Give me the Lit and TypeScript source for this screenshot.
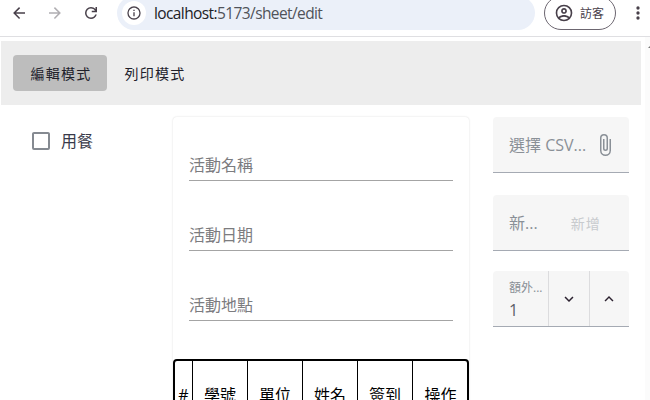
import { LitElement, html, css, svg } from "lit";
import { customElement } from "lit/decorators.js";

const mdi = (d: string, size: number, cls = "") =>
  html`<svg class=${cls} width=${size} height=${size} viewBox="0 0 24 24">${svg`<path fill="currentColor" d=${d} />`}</svg>`;

const BACK = "M20,11V13H8L13.5,18.5L12.08,19.92L4.16,12L12.08,4.08L13.5,5.5L8,11H20Z";
const FORWARD = "M4,11V13H16L10.5,18.5L11.92,19.92L19.84,12L11.92,4.08L10.5,5.5L16,11H4Z";
const RELOAD =
  "M12 20q-3.35 0-5.675-2.325T4 12q0-3.35 2.325-5.675T12 4q1.725 0 3.3.713T18 6.75V4h2v7h-7V9h4.2q-.8-1.4-2.187-2.2T12 6Q9.500 6 7.750 7.750T6 12q0 2.500 1.750 4.250T12 18q1.925 0 3.475-1.100T17.650 14h2.100q-.7 2.650-2.850 4.325T12 20";
const INFO =
  "M11,9H13V7H11M12,20C7.59,20 4,16.41 4,12C4,7.59 7.59,4 12,4C16.41,4 20,7.59 20,12C20,16.41 16.41,20 12,20M12,2A10,10 0 0,0 2,12A10,10 0 0,0 12,22A10,10 0 0,0 22,12A10,10 0 0,0 12,2M11,17H13V11H11V17Z";
const ACCOUNT =
  "M12,2A10,10 0 0,0 2,12A10,10 0 0,0 12,22A10,10 0 0,0 22,12A10,10 0 0,0 12,2M7.07,18.28C7.5,17.38 10.12,16.5 12,16.5C13.88,16.5 16.5,17.38 16.93,18.28C15.57,19.36 13.86,20 12,20C10.14,20 8.43,19.36 7.07,18.28M18.36,16.83C16.93,15.09 13.46,14.5 12,14.5C10.54,14.5 7.07,15.09 5.64,16.83C4.62,15.5 4,13.82 4,12C4,7.59 7.59,4 12,4C16.41,4 20,7.59 20,12C20,13.82 19.38,15.5 18.36,16.83M12,6C10.06,6 8.5,7.56 8.5,9.5C8.5,11.44 10.06,13 12,13C13.94,13 15.5,11.44 15.5,9.5C15.5,7.56 13.94,6 12,6M12,11A1.5,1.5 0 0,1 10.500,9.500A1.5,1.5 0 0,1 12,8A1.5,1.5 0 0,1 13.500,9.500A1.5,1.5 0 0,1 12,11Z";
const DOTS =
  "M12,16A2,2 0 0,1 14,18A2,2 0 0,1 12,20A2,2 0 0,1 10,18A2,2 0 0,1 12,16M12,10A2,2 0 0,1 14,12A2,2 0 0,1 12,14A2,2 0 0,1 10,12A2,2 0 0,1 12,10M12,4A2,2 0 0,1 14,6A2,2 0 0,1 12,8A2,2 0 0,1 10,6A2,2 0 0,1 12,4Z";
const CHECKBOX =
  "M19,3H5C3.89,3 3,3.89 3,5V19A2,2 0 0,0 5,21H19A2,2 0 0,0 21,19V5C21,3.89 20.1,3 19,3M19,5V19H5V5H19Z";
const CLIP =
  "M16.5,6V17.5A4,4 0 0,1 12.5,21.5A4,4 0 0,1 8.5,17.5V5A2.5,2.5 0 0,1 11,2.5A2.5,2.5 0 0,1 13.5,5V15.5A1,1 0 0,1 12.5,16.5A1,1 0 0,1 11.5,15.5V6H10V15.5A2.5,2.5 0 0,0 12.5,18A2.5,2.5 0 0,0 15,15.5V5A4,4 0 0,0 11,1A4,4 0 0,0 7,5V17.5A5.5,5.5 0 0,0 12.5,23A5.5,5.5 0 0,0 18,17.5V6H16.5Z";
const DOWN = "M7.41,8.58L12,13.17L16.59,8.58L18,10L12,16L6,10L7.41,8.58Z";
const UP = "M7.41,15.41L12,10.83L16.59,15.41L18,14L12,8L6,14L7.41,15.41Z";

@customElement("app-root")
export class AppRoot extends LitElement {
  static styles = css`
    :host {
      display: block;
      height: 400px;
      overflow: hidden;
      background: #fff;
      font-family: "Open Sans", "Noto Sans CJK TC", sans-serif;
      font-size: 16px;
      color: #20202a;
    }
    * { box-sizing: border-box; }
    svg { display: block; flex: none; }
    .chrome {
      display: flex;
      align-items: center;
      height: 37px;
      padding-bottom: 10px;
      border-bottom: 1px solid #dfdfe2;
      color: #48404a;
    }
    .nav { display: flex; gap: 18px; padding-left: 10px; width: 117px; }
    .off { color: #b0aeb2; }
    .url {
      display: flex;
      align-items: center;
      width: 418px;
      height: 34px;
      flex: none;
      padding-left: 5px;
      border-radius: 17px;
      background: #ebf0f9;
      color: #50535a;
      line-height: 24px;
    }
    .host { color: #202126; }
    .site {
      display: flex;
      align-items: center;
      justify-content: center;
      width: 24px;
      height: 24px;
      margin-right: 8px;
      border-radius: 50%;
      background: #fff;
      color: #48404a;
    }
    .address { font-size: 15.5px; letter-spacing: -0.6px; white-space: nowrap; }
    .guest {
      display: flex;
      align-items: center;
      gap: 6px;
      width: 72px;
      height: 34px;
      flex: none;
      margin-left: 9px;
      padding-left: 9px;
      border: 1px solid #6c6670;
      border-radius: 17px;
      font-size: 12px;
      white-space: nowrap;
    }
    .more { margin-left: 12px; }
    .view { display: flex; height: 363px; justify-content: space-between; }
    .page { width: 640px; margin: 4px 0 0 1px; }
    .track {
      width: 5px;
      padding: 8px 0 0 3px;
      background: #fbfbfb;
      color: #777;
      overflow: hidden;
    }
    .bar {
      display: flex;
      align-items: center;
      height: 64px;
      padding-left: 12px;
      background: #ededed;
    }
    .tab {
      height: 36px;
      padding: 0 15.5px 0 17.5px;
      border-radius: 4px;
      font-size: 14px;
      line-height: 37px;
      letter-spacing: 1.25px;
      white-space: nowrap;
    }
    .tab.on { width: 94px; background: #bdbdbd; }
    .body { display: flex; padding-top: 12px; }
    .left { width: 172px; padding: 12px 0 0 28px; }
    .check {
      display: flex;
      align-items: center;
      height: 24px;
      gap: 8px;
      color: #858a91;
    }
    .check span { color: #383a4a; padding-bottom: 2px; }
    .card {
      width: 296px;
      height: 300px;
      flex: none;
      border-radius: 4px;
      box-shadow: 0 0 2px rgba(0, 0, 0, 0.16);
    }
    .fields { padding: 15px 16px 0; height: 242px; }
    .line {
      height: 49px;
      margin-bottom: 21px;
      padding-top: 21px;
      border-bottom: 1px solid #a4a4a4;
      color: #7c7c7f;
      line-height: 24px;
    }
    .table {
      display: grid;
      grid-template-columns: 18px repeat(5, 55px);
      height: 80px;
      border: 2px solid #000;
      border-radius: 4px;
      color: #000;
      overflow: hidden;
    }
    .th {
      padding-top: 22px;
      line-height: 24px;
      text-align: center;
      border-right: 1px solid #000;
      white-space: nowrap;
    }
    .th:last-child { border-right: 0; }
    .side { width: 136px; margin-left: 24px; flex: none; }
    .field {
      display: flex;
      height: 56px;
      border-bottom: 1px solid #a5aab3;
      border-radius: 4px 4px 0 0;
      background: #f6f6f6;
      color: #8a9097;
      align-items: center;
      overflow: hidden;
      white-space: nowrap;
    }
    .file { padding: 0 12px 0 16px; justify-content: space-between; }
    .file span, .add span { padding-bottom: 2px; }
    .add { margin-top: 22px; padding-left: 16px; }
    .add .addbtn {
      margin-left: 33px;
      padding-bottom: 0;
      color: #c8cbce;
      font-size: 14px;
      letter-spacing: 1.25px;
    }
    .num { margin-top: 20px; align-items: stretch; }
    .value { width: 55px; padding: 8px 0 0 16px; }
    .small { font-size: 12px; line-height: 17px; }
    .digit { line-height: 28px; color: #5c6068; }
    .step {
      display: flex;
      align-items: center;
      justify-content: center;
      flex: 1;
      border-left: 1px solid #dcdcde;
      color: #2c2230;
    }
  `;

  render() {
    return html`
      <div class="chrome">
        <div class="nav">
          ${mdi(BACK, 18)} ${mdi(FORWARD, 18, "off")} ${mdi(RELOAD, 18)}
        </div>
        <div class="url">
          <div class="site">${mdi(INFO, 16)}</div>
          <div class="address"><span class="host">localhost:</span>5173/sheet/edit</div>
        </div>
        <div class="guest">${mdi(ACCOUNT, 20)}<span>訪客</span></div>
        ${mdi(DOTS, 20, "more")}
      </div>
      <div class="view">
        <div class="page">
          <div class="bar">
            <div class="tab on">編輯模式</div>
            <div class="tab">列印模式</div>
          </div>
          <div class="body">
            <div class="left">
              <div class="check">${mdi(CHECKBOX, 24)}<span>用餐</span></div>
            </div>
            <div class="card">
              <div class="fields">
                ${["活動名稱", "活動日期", "活動地點"].map((t) => html`<div class="line">${t}</div>`)}
              </div>
              <div class="table">
                ${["#", "學號", "單位", "姓名", "簽到", "操作"].map((t) => html`<div class="th">${t}</div>`)}
              </div>
            </div>
            <div class="side">
              <div class="field file"><span>選擇 CSV...</span>${mdi(CLIP, 24)}</div>
              <div class="field add"><span>新...</span><span class="addbtn">新增</span></div>
              <div class="field num">
                <div class="value">
                  <div class="small">額外...</div>
                  <div class="digit">1</div>
                </div>
                <div class="step">${mdi(DOWN, 18)}</div>
                <div class="step">${mdi(UP, 18)}</div>
              </div>
            </div>
          </div>
        </div>
        <div class="track">
          <svg width="8" height="5" viewBox="0 0 8 5"><path fill="currentColor" d="M0 3L4 -1L8 3Z" /></svg>
        </div>
      </div>
    `;
  }
}
